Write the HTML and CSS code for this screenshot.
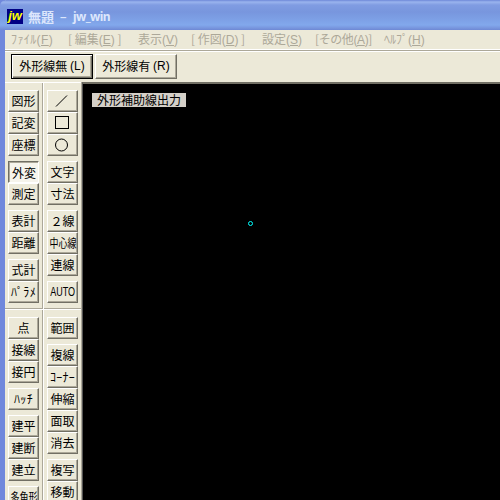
FILE: index.html
```html
<!DOCTYPE html>
<html lang="ja">
<head>
<meta charset="utf-8">
<title>無題 − jw_win</title>
<link rel="stylesheet" href="styles.css">
</head>
<body>
<div class="window">
  <header class="title"><span class="logo"><i>jw</i></span><span class="name">無題</span><span class="dash">−</span><span class="app">jw_win</span></header>
  <nav class="menu">
    <span class="m1">ﾌｧｲﾙ<b>(<u>F</u>)</b></span><span class="m2">[ 編集<b>(<u>E</u>)</b> ]</span><span class="m3">表示<b>(<u>V</u>)</b></span><span class="m4">[ 作図<b>(<u>D</u>)</b> ]</span><span class="m5">設定<b>(<u>S</u>)</b></span><span class="m6">[その他<b>(<u>A</u>)</b>]</span><span class="m7">ﾍﾙﾌﾟ<b>(<u>H</u>)</b></span>
  </nav>
  <div class="toolbar"><button class="btn wide focus">外形線無 <b>(L)</b></button><button class="btn wide">外形線有 <b>(R)</b></button></div>
  <main class="work">
    <aside class="side">
      <section class="col upper">
        <div class="group"><button class="btn">図形</button><button class="btn">記変</button><button class="btn">座標</button></div>
        <div class="group"><button class="btn pressed">外変</button><button class="btn">測定</button></div>
        <div class="group"><button class="btn">表計</button><button class="btn">距離</button></div>
        <div class="group"><button class="btn">式計</button><button class="btn kana">ﾊﾟﾗﾒ</button></div>
      </section>
      <section class="col upper">
        <div class="group">
          <button class="btn"><svg width="16" height="16" viewBox="0 0 16 16"><path d="M2 13.5L13 2.5"/></svg></button>
          <button class="btn"><svg width="16" height="16" viewBox="0 0 16 16"><path shape-rendering="crispEdges" d="M1.5 1.5h13v12h-13z"/></svg></button>
          <button class="btn"><svg width="16" height="16" viewBox="0 0 16 16"><circle cx="7.5" cy="8" r="6"/></svg></button>
        </div>
        <div class="group"><button class="btn">文字</button><button class="btn">寸法</button></div>
        <div class="group"><button class="btn">２線</button><button class="btn"><span class="narrow">中心線</span></button><button class="btn">連線</button></div>
        <div class="group"><button class="btn"><span class="narrow latin">AUTO</span></button></div>
      </section>
      <section class="col lower">
        <div class="group"><button class="btn">点</button><button class="btn">接線</button><button class="btn">接円</button></div>
        <div class="group"><button class="btn kana">ﾊｯﾁ</button></div>
        <div class="group"><button class="btn">建平</button><button class="btn">建断</button><button class="btn">建立</button></div>
        <div class="group"><button class="btn"><span class="narrow">多角形</span></button></div>
      </section>
      <section class="col lower">
        <div class="group"><button class="btn">範囲</button></div>
        <div class="group"><button class="btn">複線</button><button class="btn kana">ｺｰﾅｰ</button><button class="btn">伸縮</button><button class="btn">面取</button><button class="btn">消去</button></div>
        <div class="group"><button class="btn">複写</button><button class="btn">移動</button></div>
      </section>
    </aside>
    <div class="canvas">
      <span class="hint">外形補助線出力</span>
      <svg class="mark" width="7" height="7" viewBox="0 0 7 7"><circle cx="3.5" cy="3.5" r="2"/></svg>
    </div>
  </main>
</div>
</body>
</html>
```
FILE: styles.css
```css
* { box-sizing: border-box; }
body { margin: 0; width: 500px; height: 500px; overflow: hidden; background: #ece9d8; }
.window {
  height: 500px; display: grid; grid-template-rows: 30px 22px 30px 418px;
  border-left: 5px solid #7088dc; background: #ece9d8;
  font: 12px "Noto Sans CJK JP", sans-serif; color: #000;
}
b { font: 12px "Liberation Sans", sans-serif; }
.title {
  margin-left: -5px; padding-left: 7px; display: flex; align-items: center; white-space: pre;
  border-top-left-radius: 6px;
  background: linear-gradient(#6e88d8 0, #9ab4ee 2px, #809ce2 5px, #7896de 12px, #7c9ee4 18px, #82a8ec 25px, #7896de 28px, #6e88d4 30px);
  color: #dce6fc; font-weight: 700; font-size: 13px; line-height: 20px; padding-top: 3px;
}
.logo { width: 16px; height: 15px; margin-right: 5px; background: #000084; color: #ff0; font: 700 13px/14px "Liberation Sans", sans-serif; overflow: hidden; text-align: center; }
.name { width: 32px; font-size: 13px; }
.dash { width: 13px; font-size: 11px; }
.app { font: 700 12px "Noto Sans", "Liberation Sans", sans-serif; letter-spacing: -.6px; }
.menu {
  display: flex; padding-left: 6px; color: #aca899; white-space: pre; line-height: 17px;
  border-bottom: 1px solid #fff; box-shadow: inset 0 -1px #aca899, inset 0 -2px #fff;
}
.menu u { text-underline-offset: 1px; }
.m1 { width: 57px; } .m2 { width: 70px; } .m3 { width: 53px; } .m4 { width: 71px; }
.m5 { width: 53px; } .m6 { width: 69px; letter-spacing: -.4px; }
.m1 { letter-spacing: .4px; }
.toolbar { display: flex; gap: 2px; padding: 2px 0 0 6px; }
.btn {
  width: 31px; height: 22px; padding: 0; margin: 0; display: flex; align-items: center; justify-content: center;
  border: 1px solid; border-color: #fff #716f64 #716f64 #fff; box-shadow: inset -1px -1px #aca899;
  background: #ece9d8; font: 12px/18px "Noto Sans CJK JP", sans-serif; color: #000; white-space: pre;
}
.btn svg { fill: none; stroke: #000; margin-left: -1px; }
.btn.wide { width: 82px; height: 25px; padding-bottom: 2px; }
.focus { border: 1px solid #000; box-shadow: inset 1px 1px #fff, inset -1px -1px #716f64, inset -2px -2px #aca899; }
.pressed { background: #f6f4ec; border-color: #716f64 #fff #fff #716f64; box-shadow: inset 1px 1px #aca899; padding: 1px 0 0 1px; }
.narrow { flex: none; transform: scaleX(.75); }
.latin { font-family: "Liberation Sans", sans-serif; }
.kana { letter-spacing: .3px; }
.work { display: flex; }
.side { width: 77px; display: grid; grid-template: 227px 191px / 38px 39px; border-right: 1px solid #aca899; overflow: hidden; }
.col { display: flex; flex-direction: column; gap: 5px; padding: 7px 0 0 3px; border-left: 1px solid #fff; border-top: 1px solid #fff; box-shadow: inset -1px 0 #aca899; overflow: hidden; }
.col:nth-child(odd) { border-left: 0; }
.upper { box-shadow: inset -1px -1px #aca899; }
.canvas { flex: 1; position: relative; background: #000; border-top: 2px solid #716f64; border-left: 1px solid #555; }
.hint { position: absolute; left: 9px; top: 9px; width: 94px; height: 14px; background: #d4d0c8; line-height: 13px; text-align: center; }
.mark { position: absolute; left: 164px; top: 136px; fill: none; stroke: #0ff; }
```
